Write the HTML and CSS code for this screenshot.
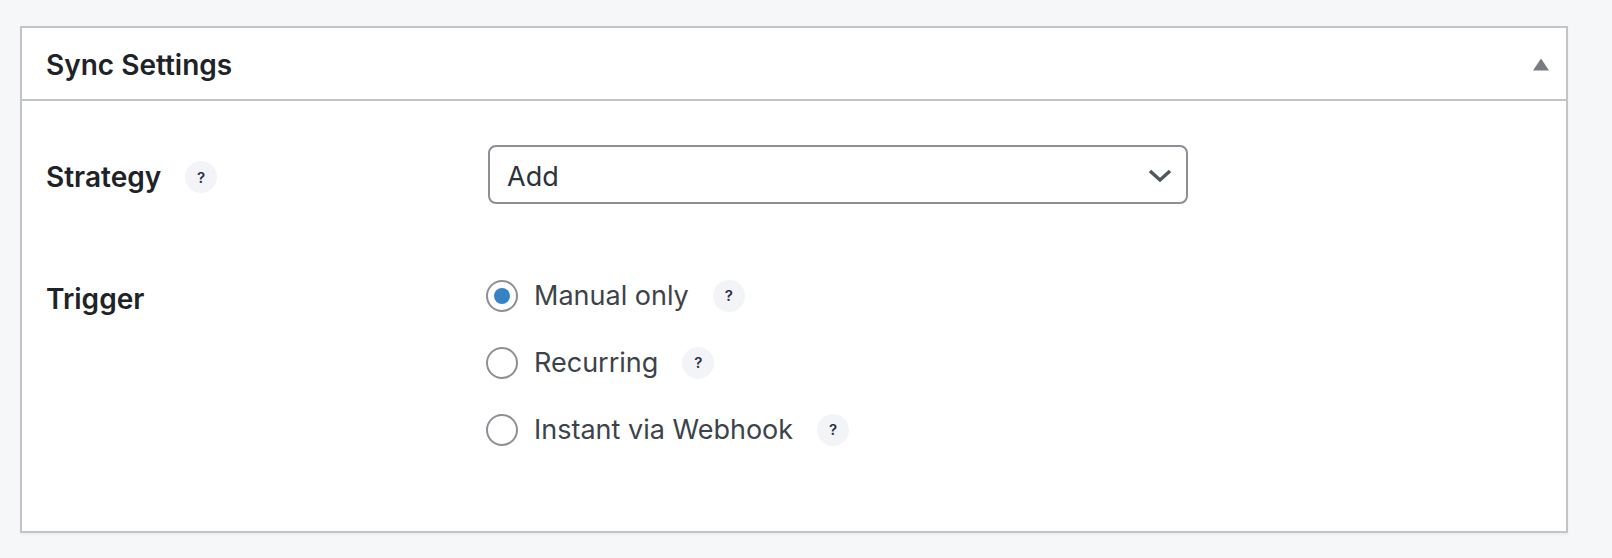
FILE: index.html
```html
<!DOCTYPE html>
<html lang="en">
<head>
  <meta charset="UTF-8" />
  <meta name="viewport" content="width=device-width, initial-scale=1.0" />
  <title>Sync Settings</title>
  <link rel="stylesheet" href="styles.css">
</head>
<body>
  <div class="postbox">
    <div class="postbox-header">
      <h2>Sync Settings</h2>
      <button class="toggle" type="button" aria-label="Toggle panel"></button>
    </div>

    <div class="inside">
      <div class="field-row strategy-row">
        <div class="field-label">
          <label for="strategy">Strategy</label>
          <span class="help">?</span>
        </div>
        <div class="field-input">
          <span class="select-wrap">
            <select id="strategy">
              <option>Add</option>
              <option>Update</option>
              <option>Add &amp; update</option>
            </select>
            <svg class="chevron" width="24" height="14" viewBox="0 0 24 14">
              <polyline points="2,2 12,11 22,2" fill="none" stroke="#50575e" stroke-width="3.5" />
            </svg>
          </span>
        </div>
      </div>

      <div class="field-row trigger-row">
        <div class="field-label">
          <span class="label-text">Trigger</span>
        </div>
        <div class="field-input options">
          <label class="option">
            <input type="radio" name="trigger" value="manual" checked />
            <span>Manual only</span>
            <span class="help">?</span>
          </label>
          <label class="option">
            <input type="radio" name="trigger" value="recurring" />
            <span>Recurring</span>
            <span class="help">?</span>
          </label>
          <label class="option">
            <input type="radio" name="trigger" value="webhook" />
            <span>Instant via Webhook</span>
            <span class="help">?</span>
          </label>
        </div>
      </div>
    </div>
  </div>
</body>
</html>
```

FILE: styles.css
```css
body {
  margin: 0;
  padding: 26px 44px 25px 20px;
  font-family: Inter, 'Noto Sans', sans-serif;
  background: #f6f7f9;
  color: #1d2327;
}

.postbox {
  background: #fff;
  border: 2px solid #c3c4c7;
  box-shadow: 0 2px 2px rgba(0, 0, 0, 0.04);
}

.postbox-header {
  display: flex;
  align-items: center;
  justify-content: space-between;
  box-sizing: border-box;
  height: 73px;
  padding: 2px 17px 0 24px;
  border-bottom: 2px solid #c3c4c7;
}

.postbox-header h2 {
  margin: 0;
  font-size: 28px;
  font-weight: 600;
  color: #1d2327;
}

/* collapse arrow */
.toggle {
  width: 16px;
  height: 12px;
  padding: 0;
  border: 0;
  background: #787c82;
  clip-path: polygon(50% 0, 100% 100%, 0 100%);
  cursor: pointer;
}

.inside {
  padding: 44px 24px 68px;
}

.field-row {
  display: grid;
  grid-template-columns: 442px 1fr;
}

.strategy-row {
  margin-bottom: 58px;
}

.field-label {
  display: flex;
  align-items: center;
  font-size: 28px;
  font-weight: 600;
  color: #1d2327;
}

.strategy-row .field-label {
  padding-top: 5px;
}

.trigger-row .field-label {
  align-items: flex-start;
  padding-top: 20px;
}

.help {
  display: inline-flex;
  align-items: center;
  justify-content: center;
  width: 32px;
  height: 32px;
  margin-left: 24px;
  border-radius: 50%;
  background: #f3f4f8;
  color: #2a2e4a;
  font-size: 15px;
  font-weight: 600;
}

.select-wrap {
  position: relative;
  display: inline-block;
}

select {
  appearance: none;
  width: 700px;
  height: 59px;
  padding: 4px 60px 0 17px;
  border: 2px solid #8c8f94;
  border-radius: 8px;
  background: #fff;
  font-family: inherit;
  font-size: 27px;
  color: #2c3338;
}

.chevron {
  position: absolute;
  top: 24px;
  right: 16px;
  pointer-events: none;
}

.options {
  display: flex;
  flex-direction: column;
}

.option {
  display: flex;
  align-items: center;
  height: 67px;
  font-size: 27px;
  color: #3c434a;
}

.option input {
  appearance: none;
  flex: none;
  width: 32px;
  height: 32px;
  margin: 0 16px 0 -2px;
  border: 2px solid #8c8f94;
  border-radius: 50%;
  background: #fff;
  display: grid;
  place-items: center;
}

.option input:checked::before {
  content: "";
  width: 16px;
  height: 16px;
  border-radius: 50%;
  background: #3582c4;
}
```
